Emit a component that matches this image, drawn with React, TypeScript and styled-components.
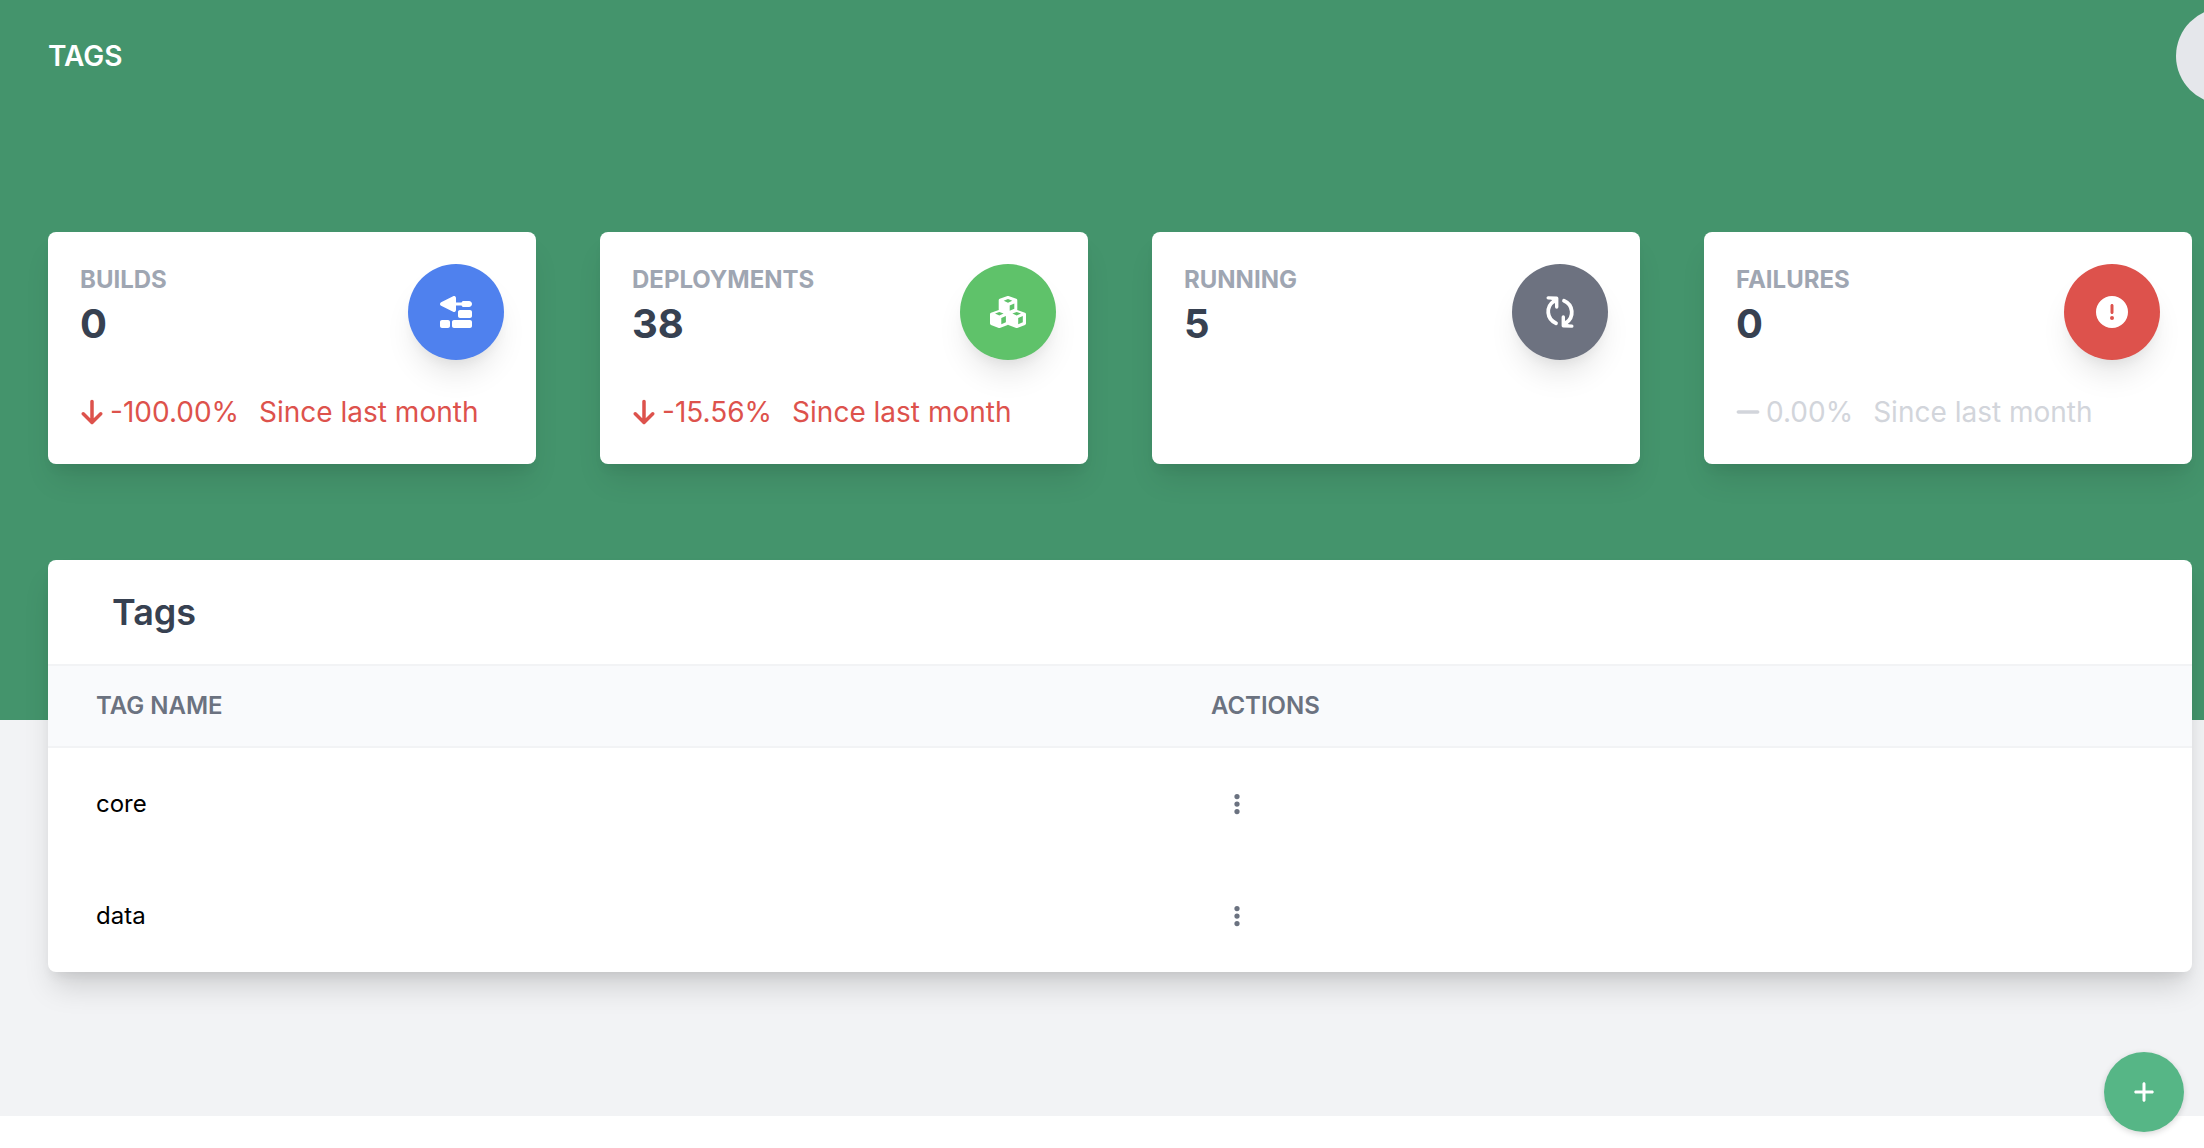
import React from "react";
import styled, { createGlobalStyle, css } from "styled-components";
import { FaTrowelBricks, FaArrowDown, FaMinus, FaCircleExclamation, FaPlus, FaEllipsisVertical } from "react-icons/fa6";

const GlobalStyle = createGlobalStyle`
  *, *::before, *::after { box-sizing: border-box; }
  body {
    margin: 0;
    background: #ffffff;
    color: #000000;
    font-family: Inter, "Liberation Sans", sans-serif;
    font-size: 24px;
    line-height: 32px;
    -webkit-font-smoothing: antialiased;
  }
  h1, h2, h3, p { margin: 0; }
  button { font: inherit; border: 0; padding: 0; cursor: pointer; }
`;

const raised = css`
  box-shadow: 0 20px 30px -6px rgba(0, 0, 0, 0.1), 0 8px 12px -4px rgba(0, 0, 0, 0.05);
`;

const Page = styled.div`
  overflow: hidden;
  padding-bottom: 144px;
  background: linear-gradient(#44946c 720px, #f2f3f5 720px);
`;

const TopBar = styled.header`
  display: flex;
  align-items: center;
  justify-content: space-between;
  height: 112px;
  padding-left: 48px;
`;

const PageTitle = styled.h1`
  color: #ffffff;
  font-size: 28px;
  font-weight: 600;
  line-height: 40px;
  text-transform: uppercase;
`;

const Avatar = styled.button`
  flex: none;
  width: 96px;
  height: 96px;
  margin-right: -68px;
  border-radius: 50%;
  background: #e5e7eb;
`;

const Content = styled.main`
  display: grid;
  gap: 96px;
  padding: 120px 12px 0 48px;
`;

const Stats = styled.section`
  display: grid;
  grid-template-columns: repeat(4, minmax(0, 1fr));
  gap: 64px;
`;

const Card = styled.article`
  display: flex;
  flex-direction: column;
  gap: 32px;
  min-height: 232px;
  padding: 32px;
  border-radius: 8px;
  background: #ffffff;
  ${raised}
`;

const CardTop = styled.div`
  display: flex;
  justify-content: space-between;
`;

const StatLabel = styled.h2`
  color: #9fa6b2;
  font-size: 24px;
  font-weight: 700;
  line-height: 32px;
  text-transform: uppercase;
`;

const StatValue = styled.p`
  color: #374151;
  font-size: 40px;
  font-weight: 700;
  line-height: 56px;
`;

const Badge = styled.div<{ $color: string }>`
  display: flex;
  align-items: center;
  justify-content: center;
  width: 96px;
  height: 96px;
  border-radius: 50%;
  background: ${(p) => p.$color};
  color: #ffffff;
  ${raised}

  svg {
    width: auto;
    height: 32px;
  }
`;

const Trend = styled.p<{ $color: string }>`
  display: flex;
  align-items: center;
  gap: 4px;
  color: ${(p) => p.$color};
  font-size: 28px;
  line-height: 40px;

  svg {
    width: auto;
    height: 28px;
    margin-left: -2px;
  }
`;

const Period = styled.span`
  margin-left: 16px;
`;

const Panel = styled.section`
  border-radius: 8px;
  background: #ffffff;
  overflow: hidden;
  box-shadow: 0 20px 30px -6px rgba(0, 0, 0, 0.15), 0 8px 12px -4px rgba(0, 0, 0, 0.07);
`;

const PanelTitle = styled.h2`
  padding: 24px 64px;
  color: #374151;
  font-size: 36px;
  font-weight: 600;
  line-height: 56px;
`;

const Table = styled.table`
  width: 100%;
  table-layout: fixed;
  border-spacing: 0;
`;

const HeadCell = styled.th`
  padding: 24px 48px;
  border: solid #f2f3f5;
  border-width: 2px 0;
  background: #f9fafc;
  color: #6b7280;
  font-weight: 600;
  text-align: left;
  text-transform: uppercase;

  &:first-child { width: 52%; }
`;

const Cell = styled.td`
  height: 112px;
  padding: 0 48px;
`;

const MenuButton = styled.button`
  display: flex;
  align-items: center;
  justify-content: center;
  width: 52px;
  height: 52px;
  background: transparent;
  color: #6b7280;
`;

const AddButton = styled.button`
  position: fixed;
  right: 20px;
  bottom: 16px;
  display: flex;
  align-items: center;
  justify-content: center;
  width: 80px;
  height: 80px;
  border-radius: 50%;
  background: #56b686;
  color: #ffffff;
  font-size: 24px;
  box-shadow: 0 2px 6px rgba(0, 0, 0, 0.16);
`;

function CycleIcon() {
  return (
    <svg viewBox="0 0 32 32" fill="none" stroke="#ffffff" strokeLinecap="round" strokeLinejoin="round" aria-hidden="true">
      <g id="cycle-arm">
        <path d="M12 27.200C2.500 23 1.500 11 10 5" strokeWidth="3.800" />
        <path d="M4.200 1.900L12.700 2.300V11" strokeWidth="3.400" />
        <path d="M8 3L12 3V8Z" fill="#ffffff" strokeWidth="1" />
      </g>
      <use href="#cycle-arm" transform="rotate(180 16 16)" />
    </svg>
  );
}

function CubesIcon({ holes }: { holes: string }) {
  return (
    <svg viewBox="0 0 36 32" fill="#ffffff" aria-hidden="true">
      <g stroke="#ffffff" strokeWidth="3" strokeLinejoin="round">
        <path d="M18 1.500L25.800 4.200V13.500L18 17L10.200 13.500V4.200Z" />
        <path d="M9.300 15.500L17.100 18.200V27.500L9.300 30.500L1.500 27.500V18.200Z" />
        <path d="M26.700 15.500L34.500 18.200V27.500L26.700 30.500L18.900 27.500V18.200Z" />
      </g>
      <g fill={holes}>
        <path d="M18 3L22.300 4.800L18 6.700L13.700 4.800Z" />
        <path d="M19.700 9.400L24.300 7.400V12.700L19.700 14.700Z" />
        <path d="M9.300 15.900L13.600 17.600L9.300 19.400L5 17.600Z" />
        <path d="M11.300 21.900L15.900 19.900V26.200L11.300 28.200Z" />
        <path d="M26.700 15.900L31 17.600L26.700 19.400L22.400 17.600Z" />
        <path d="M28.200 21.900L32.800 19.900V26.200L28.200 28.200Z" />
      </g>
    </svg>
  );
}

const RED = "#dd524c";
const GREEN = "#5fc26a";
const stats = [
  { label: "Builds", value: 0, color: "#4f81ee", icon: <FaTrowelBricks />, trend: "-100.00%", trendColor: RED, trendIcon: <FaArrowDown /> },
  { label: "Deployments", value: 38, color: GREEN, icon: <CubesIcon holes={GREEN} />, trend: "-15.56%", trendColor: RED, trendIcon: <FaArrowDown /> },
  { label: "Running", value: 5, color: "#6d7280", icon: <CycleIcon /> },
  { label: "Failures", value: 0, color: RED, icon: <FaCircleExclamation />, trend: "0.00%", trendColor: "#d2d5db", trendIcon: <FaMinus /> },
];
const tags = ["core", "data"];

export default function App() {
  return (
    <>
      <GlobalStyle />
      <Page>
        <TopBar>
          <PageTitle>Tags</PageTitle>
          <Avatar aria-label="Account" />
        </TopBar>
        <Content>
          <Stats>
            {stats.map((s) => (
              <Card key={s.label}>
                <CardTop>
                  <div>
                    <StatLabel>{s.label}</StatLabel>
                    <StatValue>{s.value}</StatValue>
                  </div>
                  <Badge $color={s.color}>{s.icon}</Badge>
                </CardTop>
                {s.trend && (
                  <Trend $color={s.trendColor}>
                    {s.trendIcon}
                    <span>{s.trend}</span>
                    <Period>Since last month</Period>
                  </Trend>
                )}
              </Card>
            ))}
          </Stats>
          <Panel>
            <PanelTitle>Tags</PanelTitle>
            <Table>
              <thead>
                <tr>
                  <HeadCell scope="col">Tag name</HeadCell>
                  <HeadCell scope="col">Actions</HeadCell>
                </tr>
              </thead>
              <tbody>
                {tags.map((tag) => (
                  <tr key={tag}>
                    <Cell>{tag}</Cell>
                    <Cell>
                      <MenuButton aria-label={`Actions for ${tag}`}>
                        <FaEllipsisVertical />
                      </MenuButton>
                    </Cell>
                  </tr>
                ))}
              </tbody>
            </Table>
          </Panel>
        </Content>
      </Page>
      <AddButton aria-label="Add tag">
        <FaPlus />
      </AddButton>
    </>
  );
}
